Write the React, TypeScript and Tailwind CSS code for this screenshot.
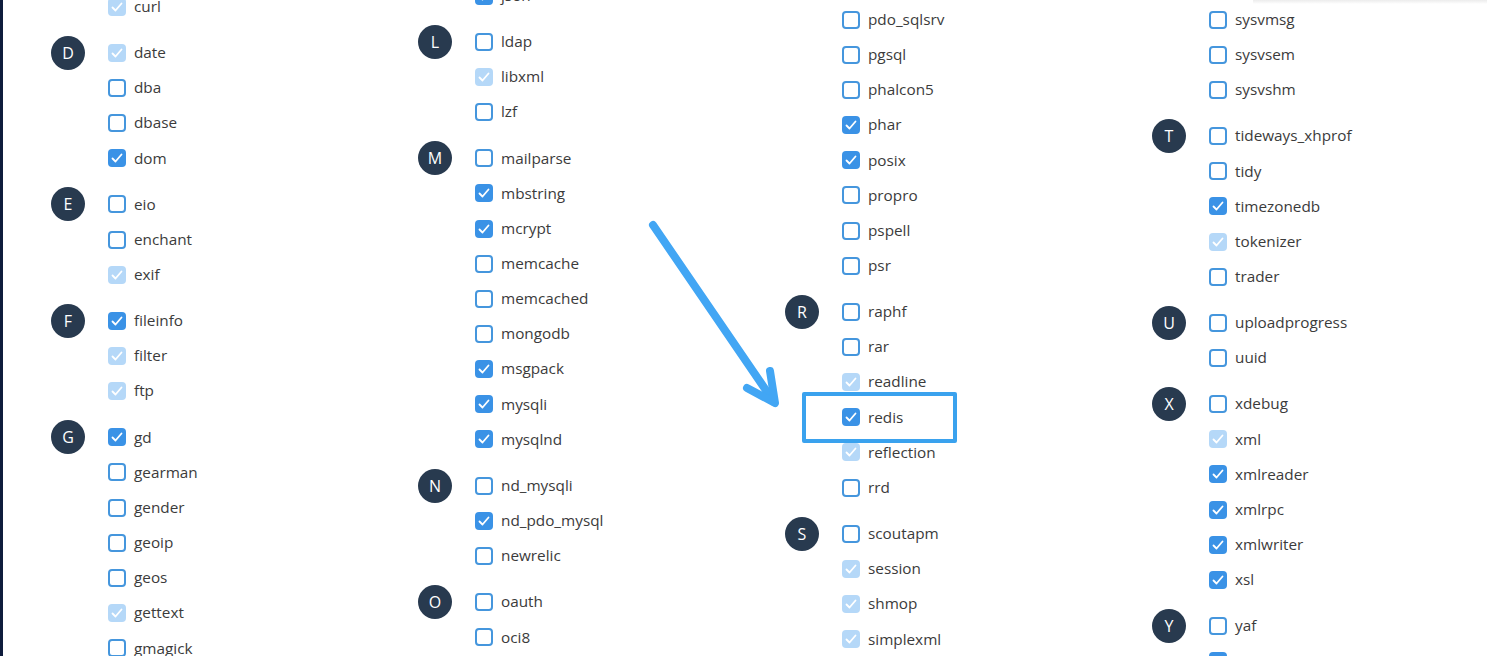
import React from "react";

type State = "off" | "on" | "locked";
type Item = { name: string; state: State; highlight?: boolean };
type Group = { letter?: string; items: Item[] };

const i = (name: string, state: State = "off", highlight = false): Item => ({ name, state, highlight });

const columns: { offset: string; groups: Group[] }[] = [
  {
    offset: "mt-[-11px]",
    groups: [
      { items: [i("curl", "locked")] },
      { letter: "D", items: [i("date", "locked"), i("dba"), i("dbase"), i("dom", "on")] },
      { letter: "E", items: [i("eio"), i("enchant"), i("exif", "locked")] },
      { letter: "F", items: [i("fileinfo", "on"), i("filter", "locked"), i("ftp", "locked")] },
      {
        letter: "G",
        items: [i("gd", "on"), i("gearman"), i("gender"), i("geoip"), i("geos"), i("gettext", "locked"), i("gmagick"), i("gmp", "locked")],
      },
    ],
  },
  {
    offset: "mt-[-22px]",
    groups: [
      { items: [i("json", "on")] },
      { letter: "L", items: [i("ldap"), i("libxml", "locked"), i("lzf")] },
      {
        letter: "M",
        items: [
          i("mailparse"),
          i("mbstring", "on"),
          i("mcrypt", "on"),
          i("memcache"),
          i("memcached"),
          i("mongodb"),
          i("msgpack", "on"),
          i("mysqli", "on"),
          i("mysqlnd", "on"),
        ],
      },
      { letter: "N", items: [i("nd_mysqli"), i("nd_pdo_mysql", "on"), i("newrelic")] },
      { letter: "O", items: [i("oauth"), i("oci8"), i("odbc")] },
    ],
  },
  {
    offset: "mt-[2px]",
    groups: [
      {
        items: [i("pdo_sqlsrv"), i("pgsql"), i("phalcon5"), i("phar", "on"), i("posix", "on"), i("propro"), i("pspell"), i("psr")],
      },
      {
        letter: "R",
        items: [i("raphf"), i("rar"), i("readline", "locked"), i("redis", "on", true), i("reflection", "locked"), i("rrd")],
      },
      { letter: "S", items: [i("scoutapm"), i("session", "locked"), i("shmop", "locked"), i("simplexml", "locked"), i("snmp")] },
    ],
  },
  {
    offset: "mt-[2px]",
    groups: [
      { items: [i("sysvmsg"), i("sysvsem"), i("sysvshm")] },
      { letter: "T", items: [i("tideways_xhprof"), i("tidy"), i("timezonedb", "on"), i("tokenizer", "locked"), i("trader")] },
      { letter: "U", items: [i("uploadprogress"), i("uuid")] },
      {
        letter: "X",
        items: [i("xdebug"), i("xml", "locked"), i("xmlreader", "on"), i("xmlrpc", "on"), i("xmlwriter", "on"), i("xsl", "on")],
      },
      { letter: "Y", items: [i("yaf"), i("yaml", "on")] },
    ],
  },
];

function Check() {
  return (
    <svg viewBox="0 0 18 18" className="w-[18px] h-[18px]">
      <polyline points="4.5,9.5 7.5,12.5 13.5,5.5" fill="none" stroke="white" strokeWidth="1.8" strokeLinecap="round" strokeLinejoin="round" />
    </svg>
  );
}

function Box({ state }: { state: State }) {
  if (state === "on") {
    return (
      <span className="w-[18px] h-[18px] rounded-[4px] bg-[#3a92e6] flex items-center justify-center shrink-0">
        <Check />
      </span>
    );
  }
  if (state === "locked") {
    return (
      <span className="w-[18px] h-[18px] rounded-[4px] bg-[#b5d8f8] flex items-center justify-center shrink-0">
        <Check />
      </span>
    );
  }
  return <span className="w-[18px] h-[18px] rounded-[4px] border-2 border-[#4596dd] bg-white shrink-0" />;
}

function Row({ item }: { item: Item }) {
  return (
    <div className="relative h-[35.17px] flex items-center gap-2">
      {item.highlight && (
        <div className="absolute left-[-40px] top-[-8px] w-[155px] h-[51px] border-4 border-[#3aa2ee] rounded-[2px]" />
      )}
      <Box state={item.state} />
      <span className="text-[15.3px] text-[#3b3b3b] leading-none whitespace-nowrap">{item.name}</span>
    </div>
  );
}

export default function App() {
  return (
    <div className="relative w-[1487px] h-[656px] overflow-hidden bg-white font-['Open_Sans',sans-serif] border-l-[3px] border-[#0e1c3c]">
      <div className="absolute top-0 left-[1250px] right-0 h-[4px] bg-gradient-to-b from-[#ececec] to-white" />
      <div className="flex pl-[48px]">
        {columns.map((col, ci) => (
          <div key={ci} className={`w-[367px] shrink-0 flex flex-col gap-[11px] ${col.offset}`}>
            {col.groups.map((g, gi) => (
              <div key={gi} className="flex">
                <div className="w-[57px] shrink-0 h-[35.17px] flex items-center">
                  {g.letter && (
                    <span className="w-[34px] h-[34px] rounded-full bg-[#283a4f] text-white text-[16px] flex items-center justify-center">
                      {g.letter}
                    </span>
                  )}
                </div>
                <div className="flex flex-col">
                  {g.items.map((it) => (
                    <Row key={it.name} item={it} />
                  ))}
                </div>
              </div>
            ))}
          </div>
        ))}
      </div>
      <svg className="absolute left-0 top-0 pointer-events-none" width="1487" height="656">
        <g fill="none" stroke="#42a6f4" strokeWidth="8" strokeLinecap="round" strokeLinejoin="round">
          <line x1="650" y1="225" x2="771" y2="402" />
          <polyline points="744,388 772,403 767,371" />
        </g>
      </svg>
    </div>
  );
}
